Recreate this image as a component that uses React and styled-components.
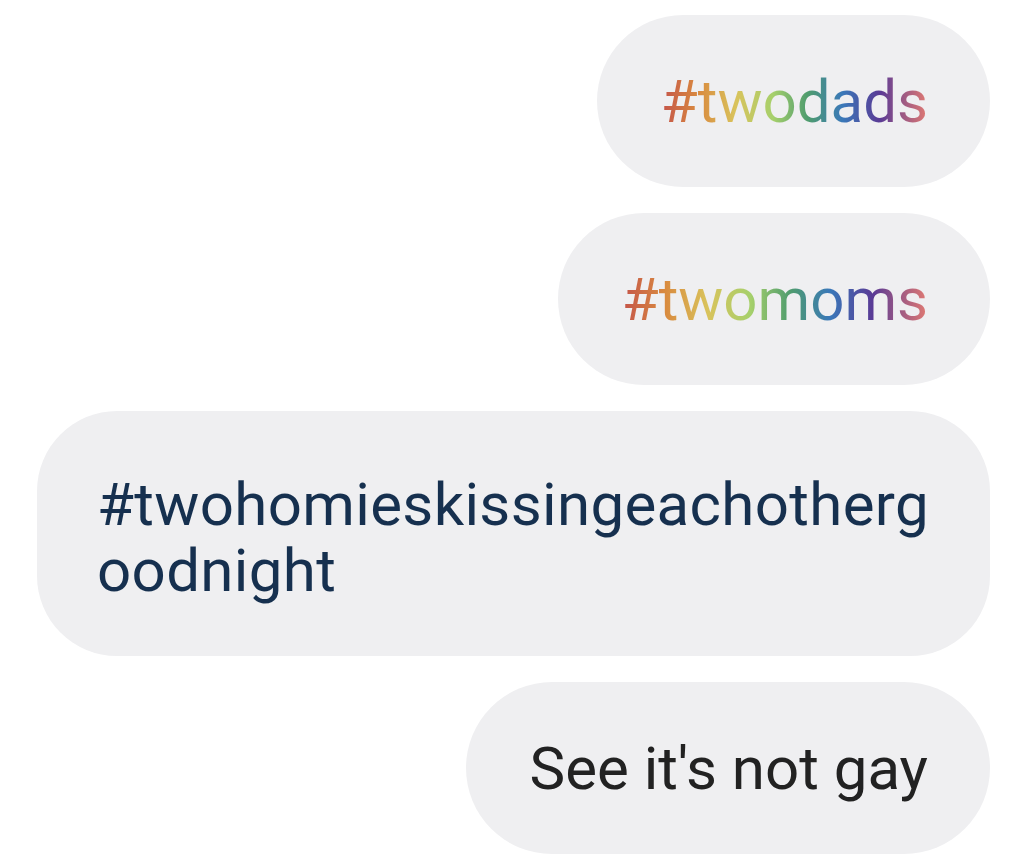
import React from "react";
import styled, { createGlobalStyle, css } from "styled-components";

const Global = createGlobalStyle`
  html, body { margin: 0; padding: 0; background: #ffffff; }
  body { font-family: Roboto, "Liberation Sans", Arial, sans-serif; }
`;

const Thread = styled.div`
  display: flex;
  flex-direction: column;
  align-items: flex-end;
  gap: 26px;
  padding: 15px 34px 0 37px;
  width: 1024px;
  box-sizing: border-box;
`;

const Bubble = styled.div`
  background: #efeff1;
  border-radius: 86px;
  padding: 54px 62px 52px 64px;
  font-size: 60px;
  line-height: 66px;
  color: ${(p) => p.$color || "#222"};
  ${(p) =>
    p.$wide &&
    css`
      align-self: stretch;
      padding: 61px 60px 52px 60px;
      border-radius: 80px;
      letter-spacing: 0.35px;
    `}
`;

const Rainbow = styled.span`
  background: linear-gradient(
    90deg,
    #c4544a 0%,
    #d98a3f 14%,
    #d9c35c 28%,
    #a6d06c 42%,
    #4f9c6e 55%,
    #3a78b9 68%,
    #5a3a95 82%,
    #e27a72 100%
  );
  -webkit-background-clip: text;
  background-clip: text;
  color: transparent;
`;

export default function App() {
  return (
    <>
      <Global />
      <Thread>
        <Bubble>
          <Rainbow>#twodads</Rainbow>
        </Bubble>
        <Bubble>
          <Rainbow>#twomoms</Rainbow>
        </Bubble>
        <Bubble $wide $color="#16304f">
          #twohomieskissingeachotherg
          <br />
          oodnight
        </Bubble>
        <Bubble $color="#222222">See it's not gay</Bubble>
      </Thread>
    </>
  );
}
